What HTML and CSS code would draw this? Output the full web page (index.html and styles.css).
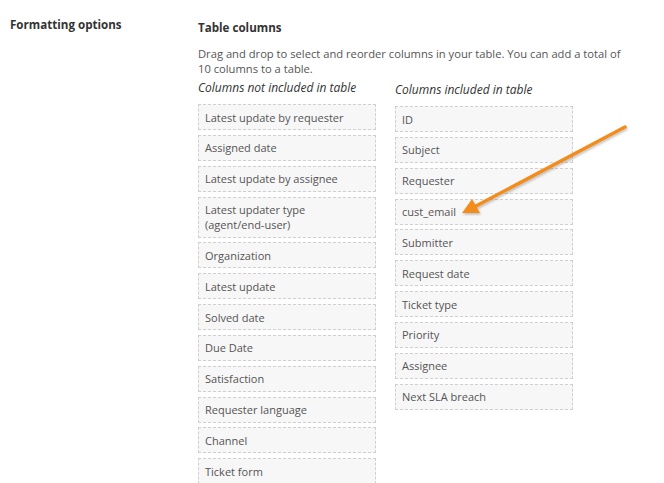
FILE: index.html
```html
<!DOCTYPE html>
<html>
<head>
<meta charset="utf-8">
<link rel="stylesheet" href="styles.css">
</head>
<body>
<div class="page">
  <div class="label">Formatting options</div>
  <div class="content">
    <h3 class="title">Table columns</h3>
    <p class="desc">Drag and drop to select and reorder columns in your table. You can add a total of 10 columns to a table.</p>
    <div class="lists">
      <div class="col">
        <div class="col-head">Columns not included in table</div>
        <ul class="items">
          <li>Latest update by requester</li>
          <li>Assigned date</li>
          <li>Latest update by assignee</li>
          <li>Latest updater type (agent/end-user)</li>
          <li>Organization</li>
          <li>Latest update</li>
          <li>Solved date</li>
          <li>Due Date</li>
          <li>Satisfaction</li>
          <li>Requester language</li>
          <li>Channel</li>
          <li>Ticket form</li>
        </ul>
      </div>
      <div class="col col-right">
        <div class="col-head">Columns included in table</div>
        <ul class="items">
          <li>ID</li>
          <li>Subject</li>
          <li>Requester</li>
          <li>cust_email</li>
          <li>Submitter</li>
          <li>Request date</li>
          <li>Ticket type</li>
          <li>Priority</li>
          <li>Assignee</li>
          <li>Next SLA breach</li>
        </ul>
      </div>
    </div>
  </div>
</div>
<svg class="arrow" width="664" height="483" viewBox="0 0 664 483">
  <defs>
    <filter id="sh" x="-10%" y="-10%" width="120%" height="120%">
      <feDropShadow dx="1" dy="1.5" stdDeviation="1" flood-color="#000" flood-opacity="0.25"/>
    </filter>
  </defs>
  <g filter="url(#sh)">
    <line x1="625" y1="127" x2="476" y2="206" stroke="#f28c1e" stroke-width="3.5" stroke-linecap="round"/>
    <polygon points="462,213 472,199 480,213" fill="#f28c1e"/>
  </g>
</svg>
</body>
</html>
```

FILE: styles.css
```css
html, body {
  margin: 0;
  padding: 0;
  background: #fff;
}
body {
  font-family: "Open Sans", "DejaVu Sans", sans-serif;
  color: #555;
  font-size: 11px;
}
.page {
  display: flex;
  position: relative;
  height: 483px;
  overflow: hidden;
}
.label {
  width: 188px;
  padding: 17px 0 0 10px;
  font-weight: bold;
  color: #333;
  font-size: 11.6px;
}
.content {
  width: 440px;
  padding-top: 20px;
}
.title {
  margin: 0;
  font-size: 11.6px;
  font-weight: bold;
  color: #333;
  line-height: 16px;
}
.desc {
  width: 430px;
  margin: 10px 0 0;
  line-height: 15px;
  font-size: 11.2px;
}
.lists {
  display: flex;
  gap: 19px;
  margin-top: 4px;
}
.col {
  width: 178px;
}
.col-head {
  font-style: italic;
  color: #333;
  line-height: 15px;
  font-size: 12px;
}
.col-right .col-head {
  margin-top: 2px;
}
.items {
  list-style: none;
  margin: 9px 0 0;
  padding: 0;
}
.col-right .items {
  margin-top: 9px;
}
.items li {
  border: 1px dashed #d0d0d0;
  background: #f7f7f7;
  padding: 4.5px 12px 4.5px 6px;
  line-height: 15px;
  margin-bottom: 4.85px;
}
.arrow {
  position: absolute;
  left: 0;
  top: 0;
  pointer-events: none;
}
```
